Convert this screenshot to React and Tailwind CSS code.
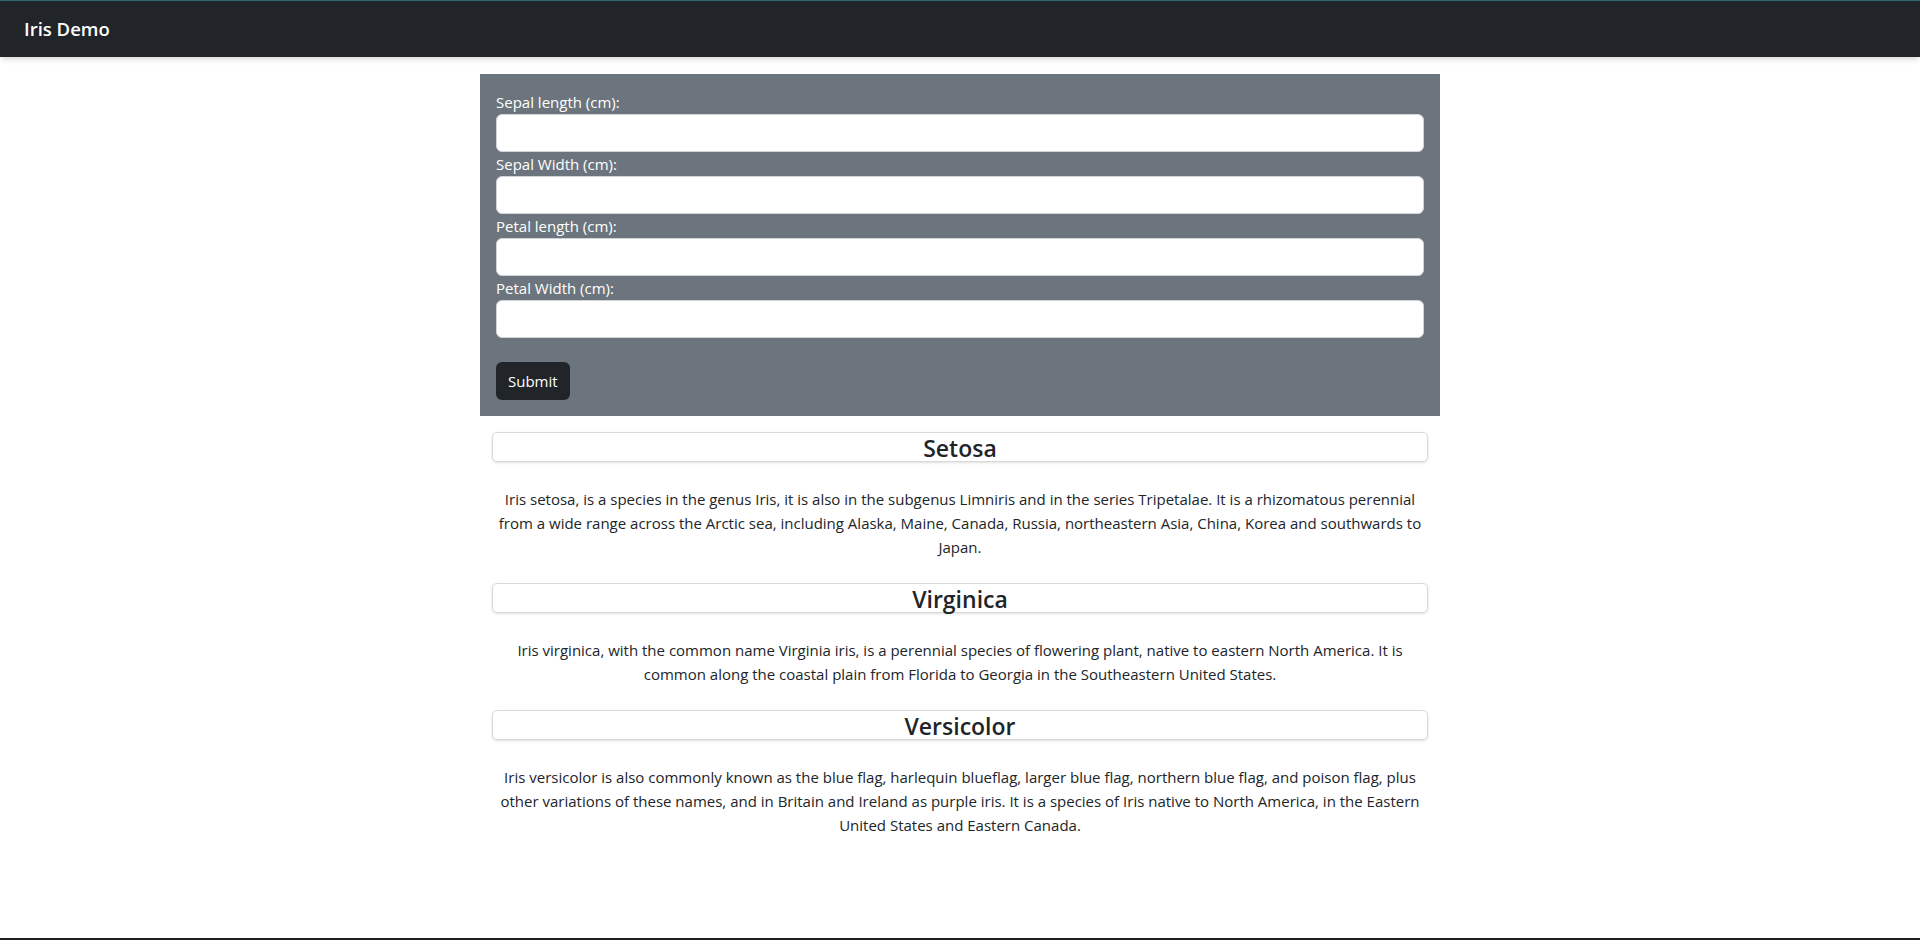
import React from 'react';

const fields = ['Sepal length (cm):', 'Sepal Width (cm):', 'Petal length (cm):', 'Petal Width (cm):'];

const species = [
    {
        name: 'Setosa',
        lines: [
            'Iris setosa, is a species in the genus Iris, it is also in the subgenus Limniris and in the series Tripetalae. It is a rhizomatous perennial',
            'from a wide range across the Arctic sea, including Alaska, Maine, Canada, Russia, northeastern Asia, China, Korea and southwards to',
            'Japan.',
        ],
    },
    {
        name: 'Virginica',
        lines: [
            'Iris virginica, with the common name Virginia iris, is a perennial species of flowering plant, native to eastern North America. It is',
            'common along the coastal plain from Florida to Georgia in the Southeastern United States.',
        ],
    },
    {
        name: 'Versicolor',
        lines: [
            'Iris versicolor is also commonly known as the blue flag, harlequin blueflag, larger blue flag, northern blue flag, and poison flag, plus',
            'other variations of these names, and in Britain and Ireland as purple iris. It is a species of Iris native to North America, in the Eastern',
            'United States and Eastern Canada.',
        ],
    },
];

export default function App() {
    return (
        <div className="min-h-[940px] flex flex-col bg-white font-['Open_Sans',sans-serif] text-[#212529]">
            <nav className="h-[57px] border-t border-[#2c6e70] bg-[#212529] shadow-md flex items-center px-6 shrink-0">
                <span className="text-white text-[18.5px] font-semibold">Iris Demo</span>
            </nav>

            <main className="flex-1 w-[960px] mx-auto">
                <form className="mt-[17px] bg-[#6c757d] p-4" onSubmit={e => e.preventDefault()}>
                    {fields.map(f => (
                        <div key={f}>
                            <label className="block text-white text-[15px] leading-6">{f}</label>
                            <input type="text" className="block w-full h-[38px] bg-white border border-[#ced4da] rounded-md px-3 outline-none" />
                        </div>
                    ))}
                    <button type="submit" className="mt-6 h-[38px] px-3 bg-[#212529] text-white text-[15px] rounded-md">Submit</button>
                </form>

                <div className="px-3 mt-4">
                    {species.map(s => (
                        <div key={s.name}>
                            <div className="h-[30px] border border-[#d9d9d9] rounded-[5px] shadow-sm flex items-center justify-center">
                                <h4 className="text-[23px] font-semibold leading-[28px] pt-[2px]">{s.name}</h4>
                            </div>
                            <p className="pt-[25px] pb-[24px] text-center text-[15px] leading-6">
                                {s.lines.map((l, i) => (
                                    <React.Fragment key={i}>
                                        {l}
                                        {i < s.lines.length - 1 && <br />}
                                    </React.Fragment>
                                ))}
                            </p>
                        </div>
                    ))}
                </div>
            </main>

            <div className="h-[2px] bg-[#1f1f1f] shrink-0" />
        </div>
    );
}
